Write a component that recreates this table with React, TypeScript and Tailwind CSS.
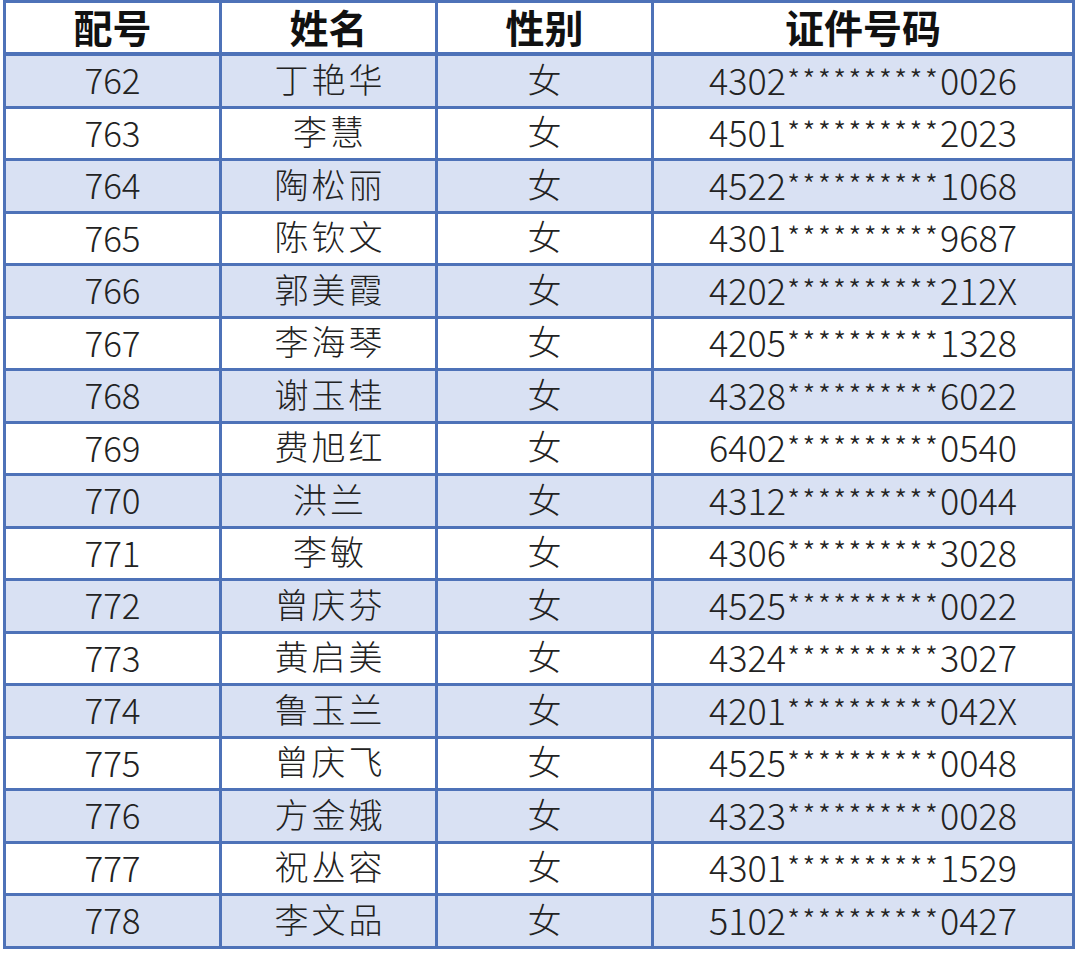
import React from "react";

const rows: [string, string, string][] = [
  ["762", "丁艳华", "4302**********0026"],
  ["763", "李慧", "4501**********2023"],
  ["764", "陶松丽", "4522**********1068"],
  ["765", "陈钦文", "4301**********9687"],
  ["766", "郭美霞", "4202**********212X"],
  ["767", "李海琴", "4205**********1328"],
  ["768", "谢玉桂", "4328**********6022"],
  ["769", "费旭红", "6402**********0540"],
  ["770", "洪兰", "4312**********0044"],
  ["771", "李敏", "4306**********3028"],
  ["772", "曾庆芬", "4525**********0022"],
  ["773", "黄启美", "4324**********3027"],
  ["774", "鲁玉兰", "4201**********042X"],
  ["775", "曾庆飞", "4525**********0048"],
  ["776", "方金娥", "4323**********0028"],
  ["777", "祝丛容", "4301**********1529"],
  ["778", "李文品", "5102**********0427"],
];

const font = { fontFamily: '"Noto Sans CJK SC", "Noto Sans", sans-serif' };

export default function App() {
  return (
    <div className="w-[1080px] h-[954px] bg-white" style={font}>
      <div className="ml-[3px] w-[1072px] border-t-[3px] border-l-[3px] border-r-[3px] border-[#4e72b8]">
        <div className="grid grid-cols-[216px_216px_216px_1fr] h-[53px] border-b-[4px] border-[#4e72b8] bg-white text-[39px] font-bold text-[#111] leading-none">
          <div className="flex items-center justify-center pb-[2px] border-r-[3px] border-[#4e72b8]">配号</div>
          <div className="flex items-center justify-center pb-[2px] border-r-[3px] border-[#4e72b8]">姓名</div>
          <div className="flex items-center justify-center pb-[2px] border-r-[3px] border-[#4e72b8]">性别</div>
          <div className="flex items-center justify-center pb-[2px]">证件号码</div>
        </div>
        {rows.map(([no, name, id], i) => (
          <div
            key={no}
            className={
              "grid grid-cols-[216px_216px_216px_1fr] h-[52.5px] border-b-[3px] border-[#4e72b8] text-[34px] font-light text-[#222] leading-none " +
              (i % 2 === 0 ? "bg-[#d9e1f3]" : "bg-white")
            }
          >
            <div className="flex items-center justify-center pb-[4px] border-r-[3px] border-[#4e72b8] text-[35px]">{no}</div>
            <div className="flex items-center justify-center pb-[4px] border-r-[3px] border-[#4e72b8] tracking-[3px] pl-[3px]">{name}</div>
            <div className="flex items-center justify-center pb-[4px] border-r-[3px] border-[#4e72b8]">女</div>
            <div className="flex items-center justify-center pb-[4px] text-[36px]">
              <span>{id.slice(0, 4)}</span>
              <span className="text-[30px] tracking-[2px] pl-[1px] self-center">{id.slice(4, 14)}</span>
              <span>{id.slice(14)}</span>
            </div>
          </div>
        ))}
      </div>
    </div>
  );
}
